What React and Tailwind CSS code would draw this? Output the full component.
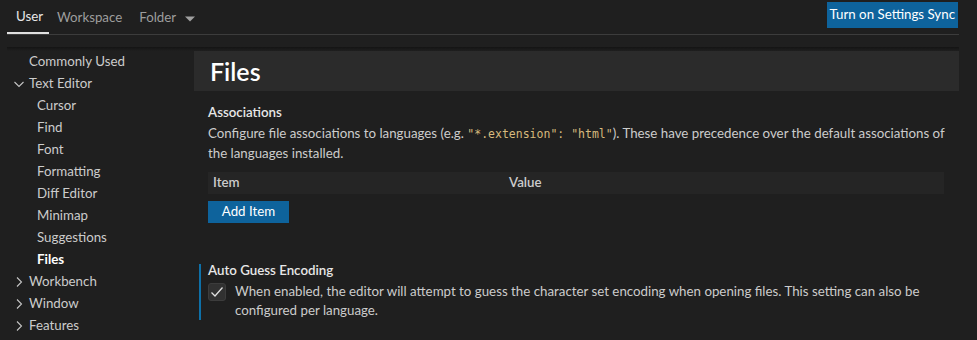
import React from "react";

function Chevron({ down }) {
  return (
    <svg width="16" height="16" viewBox="0 0 16 16" className="shrink-0">
      {down ? (
        <path d="M3.5 6 L8 10.5 L12.5 6" fill="none" stroke="#c5c5c5" strokeWidth="1.1" />
      ) : (
        <path d="M6 3.5 L10.5 8 L6 12.5" fill="none" stroke="#c5c5c5" strokeWidth="1.1" />
      )}
    </svg>
  );
}

function TreeRow({ label, indent, chevron, bold }) {
  return (
    <div className="h-[22px] flex items-center">
      {indent === 0 && <div className="w-[22px]" />}
      {indent === 1 && (
        <div className="w-[22px] flex items-center justify-start pl-[4px]">
          <Chevron down={chevron === "down"} />
        </div>
      )}
      {indent === 2 && <div className="w-[30px]" />}
      <span className={bold ? "font-bold text-white" : "text-[#cccccc]"}>{label}</span>
    </div>
  );
}

export default function App() {
  return (
    <div
      className="w-[977px] h-[340px] bg-[#1f1f1f] overflow-hidden text-[13.3px] text-[#cccccc]"
      style={{ fontFamily: '"Segoe UI", "Lato", sans-serif' }}
    >
      <div className="ml-[7px] w-[952px]">
        {/* Header tabs */}
        <div className="h-[35px] flex items-start border-b border-[#3c3c3c]">
          <div className="flex items-center h-[34px]">
            <div className="h-[34px] w-[42px] pl-[9px] flex items-center border-b-[2px] border-[#e0e0e0] text-[#e7e7e7] pt-[2px]">
              User
            </div>
            <div className="h-[34px] pl-[8px] pr-[9px] flex items-center text-[#9d9d9d] pt-[2px]">Workspace</div>
            <div className="h-[34px] px-[8px] flex items-center text-[#9d9d9d] pt-[2px]">
              Folder
              <svg width="12" height="8" viewBox="0 0 12 8" className="ml-[8px] mt-[2px]">
                <path d="M1 1.5 L11 1.5 L6 6.5 Z" fill="#a0a0a0" />
              </svg>
            </div>
          </div>
          <div className="flex-1" />
          <div className="mt-[2px] h-[26px] px-[3px] bg-[#0e639c] text-white flex items-center whitespace-nowrap mr-[1px]">
            Turn on Settings Sync
          </div>
        </div>

        {/* Body */}
        <div className="relative flex mt-[12px]">
          <div className="absolute left-0 right-0 top-0 h-[4px] bg-gradient-to-b from-[#141414] to-[#1f1f1f] pointer-events-none" />
          {/* Tree */}
          <div className="w-[187px] pt-[4px]">
            <TreeRow label="Commonly Used" indent={0} />
            <TreeRow label="Text Editor" indent={1} chevron="down" />
            <TreeRow label="Cursor" indent={2} />
            <TreeRow label="Find" indent={2} />
            <TreeRow label="Font" indent={2} />
            <TreeRow label="Formatting" indent={2} />
            <TreeRow label="Diff Editor" indent={2} />
            <TreeRow label="Minimap" indent={2} />
            <TreeRow label="Suggestions" indent={2} />
            <TreeRow label="Files" indent={2} bold />
            <TreeRow label="Workbench" indent={1} chevron="right" />
            <TreeRow label="Window" indent={1} chevron="right" />
            <TreeRow label="Features" indent={1} chevron="right" />
          </div>

          {/* Content */}
          <div className="flex-1 pt-[4px]">
            <div className="h-[40px] bg-[#2b2b2b] flex items-center pl-[16px]">
              <span className="text-[25px] font-semibold text-white leading-none">Files</span>
            </div>

            <div className="pl-[14px] pr-[10px] pt-[12px]">
              <div className="font-semibold text-[#e7e7e7] leading-[18px]">Associations</div>
              <div className="mt-[3px] leading-[19px] text-[#cccccc]">
                Configure file associations to languages (e.g.{" "}
                <span
                  className="text-[#d7ba7d] whitespace-pre"
                  style={{ fontFamily: '"DejaVu Sans Mono", monospace', fontSize: "11.5px" }}
                >
                  {'"*.extension": "html"'}
                </span>
                ). These have precedence over the default associations of the languages installed.
              </div>
              <div className="mt-[9px] mr-[5px] h-[22px] bg-[#252525] flex items-center font-semibold text-[#cccccc]">
                <div className="w-[301px] pl-[5px]">Item</div>
                <div>Value</div>
              </div>
              <div className="mt-[7px] h-[22px] w-[81px] bg-[#0e639c] text-white flex items-center justify-center">
                Add Item
              </div>
            </div>

            <div className="mt-[38px] flex">
              <div className="w-[5px]" />
              <div className="w-[2px] bg-[#0e70a8] mt-[3px] h-[56px]" />
              <div className="pl-[7px] pr-[30px] flex-1">
                <div className="font-semibold text-[#e7e7e7] leading-[18px]">Auto Guess Encoding</div>
                <div className="flex mt-[4px]">
                  <div className="w-[18px] h-[18px] shrink-0 rounded-[3px] bg-[#313131] border border-[#3c3c3c] flex items-center justify-center">
                    <svg width="16" height="16" viewBox="0 0 16 16">
                      <path d="M2.5 8.5 L6 12 L13.5 3.5" fill="none" stroke="#e0e0e0" strokeWidth="1.3" />
                    </svg>
                  </div>
                  <div className="ml-[9px] leading-[19px] -mt-[1px]">
                    When enabled, the editor will attempt to guess the character set encoding when opening files. This setting can also be configured per language.
                  </div>
                </div>
              </div>
            </div>
          </div>
        </div>
      </div>
    </div>
  );
}
